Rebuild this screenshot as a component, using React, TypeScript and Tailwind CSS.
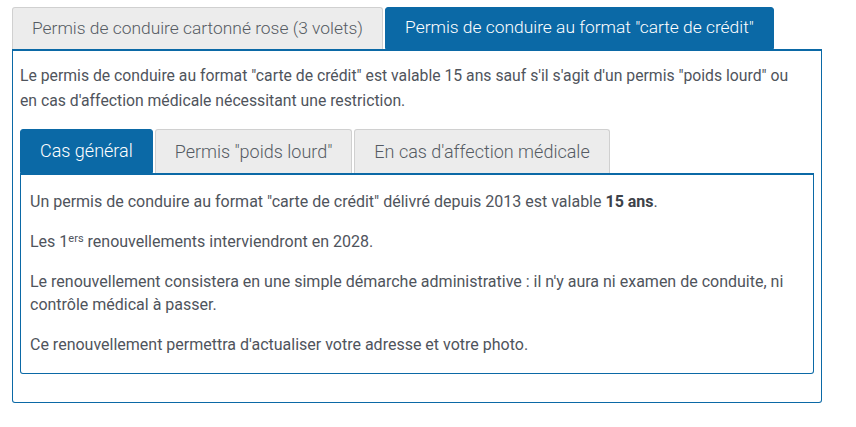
import { useState } from "react";

const BLUE = "bg-[#0b69a6]";

interface TabProps {
    label: string;
    active: boolean;
    onClick: () => void;
    className?: string;
}

function Tab({ label, active, onClick, className = "" }: TabProps) {
    return (
        <button
            type="button"
            onClick={onClick}
            className={
                "rounded-t-[3px] border font-light leading-none whitespace-nowrap " +
                (active
                    ? `${BLUE} border-[#0b69a6] text-white`
                    : "bg-[#ececec] border-[#d0d0d0] border-b-0 text-[#555b63]") +
                " " +
                className
            }
        >
            {label}
        </button>
    );
}

export default function App() {
    const [outer, setOuter] = useState(1);
    const [inner, setInner] = useState(0);

    const outerTabs = ['Permis de conduire cartonné rose (3 volets)', 'Permis de conduire au format "carte de crédit"'];
    const innerTabs = ["Cas général", 'Permis "poids lourd"', "En cas d'affection médicale"];

    return (
        <div className="min-h-screen bg-white pl-[12px] pt-[7px] font-['Roboto',sans-serif] text-[#4f545c]">
            <div className="w-[810px]">
                {/* Outer tabs */}
                <div className="flex gap-[2px]">
                    {outerTabs.map((t, i) => (
                        <Tab
                            key={t}
                            label={t}
                            active={outer === i}
                            onClick={() => setOuter(i)}
                            className="h-[42px] px-[19px] text-[17.4px]"
                        />
                    ))}
                </div>

                {/* Outer panel */}
                <div className="border border-t-2 border-[#0b69a6] rounded-b-[3px] px-[7px] pt-[12px] pb-[28px]">
                    <p className="text-[15.75px] leading-[25px]">
                        Le permis de conduire au format "carte de crédit" est valable 15 ans sauf s'il s'agit d'un permis "poids lourd" ou
                        <br />
                        en cas d'affection médicale nécessitant une restriction.
                    </p>

                    {/* Inner tabs */}
                    <div className="mt-[16px] flex gap-[2px]">
                        {innerTabs.map((t, i) => (
                            <Tab
                                key={t}
                                label={t}
                                active={inner === i}
                                onClick={() => setInner(i)}
                                className="h-[44px] px-[19px] text-[18px]"
                            />
                        ))}
                    </div>

                    {/* Inner panel */}
                    <div className="border border-t-2 border-[#0b69a6] rounded-b-[3px] px-[9px] pt-[15px] pb-[17px] text-[16px] leading-[23px]">
                        <div className="flex flex-col gap-[17px]">
                            <p>
                                Un permis de conduire au format "carte de crédit" délivré depuis 2013 est valable{" "}
                                <strong className="font-bold text-[#3d4249]">15 ans</strong>.
                            </p>
                            <p>
                                Les 1<sup className="text-[11px]">ers</sup> renouvellements interviendront en 2028.
                            </p>
                            <p>
                                Le renouvellement consistera en une simple démarche administrative : il n'y aura ni examen de conduite, ni
                                <br />
                                contrôle médical à passer.
                            </p>
                            <p>Ce renouvellement permettra d'actualiser votre adresse et votre photo.</p>
                        </div>
                    </div>
                </div>
            </div>
        </div>
    );
}
